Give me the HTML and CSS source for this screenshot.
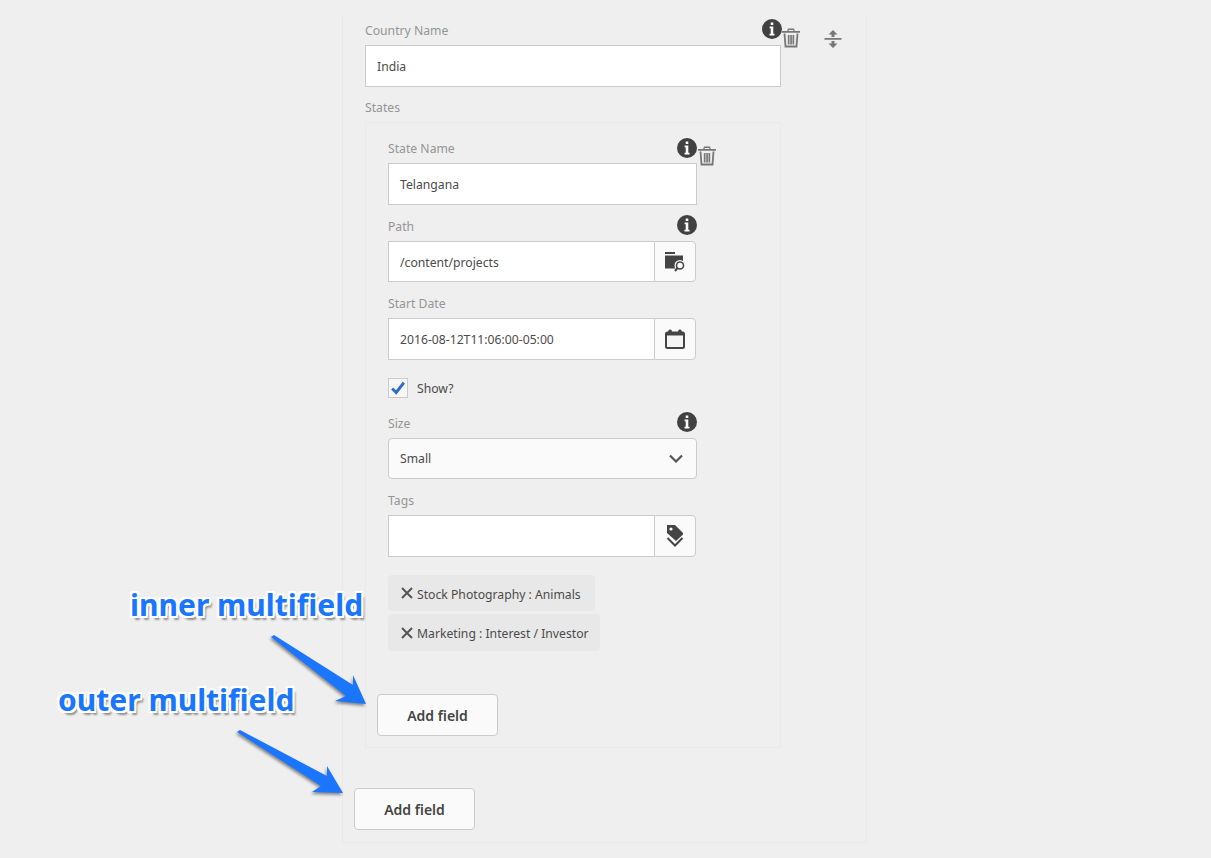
FILE: index.html
```html
<!DOCTYPE html>
<html lang="en">
<head>
<meta charset="utf-8">
<title>Multifield</title>
<link rel="stylesheet" href="styles.css">
</head>
<body>
<main class="panel outer">
  <div class="item outer-item">
    <div class="field country">
      <div class="label">Country Name</div>
      <div class="input">India</div>
      <svg class="info" viewBox="0 0 20 20"><use href="#i-info"/></svg>
      <svg class="trash" viewBox="0 0 20 20"><use href="#i-trash"/></svg>
    </div>
    <svg class="move" viewBox="0 0 18 20"><path d="M9 1l4.500 4.500H10.500V8h-3V5.500H4.500zM0.500 9h17v1.800H0.500zM7.500 12h3v2.500h3L9 19l-4.500-4.500h3z"/></svg>
    <div class="label">States</div>
    <section class="panel inner">
      <div class="item inner-item">
        <div class="field state">
          <div class="label">State Name</div>
          <div class="input">Telangana</div>
          <svg class="info" viewBox="0 0 20 20"><use href="#i-info"/></svg>
          <svg class="trash" viewBox="0 0 20 20"><use href="#i-trash"/></svg>
        </div>
        <div class="field">
          <div class="label">Path</div>
          <div class="input-group short">
            <div class="input">/content/projects</div>
            <div class="addon">
              <svg class="addon-icon" viewBox="0 0 20 20"><path fill="#444" d="M0 0h10v2H0zM0 3.500h18v13H0z"/><circle cx="15" cy="13.500" r="5.500" fill="#fafafa"/><circle cx="15" cy="13.500" r="3.500" fill="#fff" stroke="#444" stroke-width="1.600"/><path stroke="#444" stroke-width="2" d="M12.500 16L10 19"/></svg>
            </div>
          </div>
          <svg class="info" viewBox="0 0 20 20"><use href="#i-info"/></svg>
        </div>
        <div class="field">
          <div class="label">Start Date</div>
          <div class="input-group">
            <div class="input">2016-08-12T11:06:00-05:00</div>
            <div class="addon">
              <svg class="addon-icon" viewBox="0 0 20 20"><rect x="1" y="3.500" width="18" height="15.500" rx="1.500" fill="#f4f4f4" stroke="#444" stroke-width="2"/><path fill="#444" d="M1 3h18v3.500H1z"/><rect x="3.300" y="0.500" width="3.600" height="5" rx="1.500" fill="#444"/><rect x="13.100" y="0.500" width="3.600" height="5" rx="1.500" fill="#444"/></svg>
            </div>
          </div>
        </div>
        <label class="check-row">
          <span class="checkbox"><svg viewBox="0 0 20 20"><path fill="none" stroke="#2d6cc9" stroke-width="3.200" d="M3.500 10.500l4.500 4.500 8.500-11"/></svg></span>
          <span class="check-text">Show?</span>
        </label>
        <div class="field">
          <div class="label">Size</div>
          <div class="select">
            <span>Small</span>
            <svg class="chev" viewBox="0 0 14 9"><path fill="none" stroke="#555" stroke-width="2.200" d="M1 1.500l6 6 6-6"/></svg>
          </div>
          <svg class="info" viewBox="0 0 20 20"><use href="#i-info"/></svg>
        </div>
        <div class="field tags-field">
          <div class="label">Tags</div>
          <div class="input-group">
            <div class="input"></div>
            <div class="addon">
              <svg class="addon-icon tag-icon" viewBox="0 0 18 22"><path fill="#444" d="M1 0h8l8 8v1.500L10 16 1 8z"/><circle cx="5" cy="4" r="1.600" fill="#fff"/><path fill="none" stroke="#444" stroke-width="2" d="M1.500 13l7.500 7.500L16.500 13"/></svg>
            </div>
          </div>
        </div>
        <ul class="tags">
          <li class="tag one"><svg class="x" viewBox="0 0 12 12"><path stroke="#555" stroke-width="2" d="M1 1l10 10M11 1L1 11"/></svg><span class="tag-text">Stock Photography : Animals</span></li>
          <li class="tag two"><svg class="x" viewBox="0 0 12 12"><path stroke="#555" stroke-width="2" d="M1 1l10 10M11 1L1 11"/></svg><span class="tag-text">Marketing : Interest / Investor</span></li>
        </ul>
      </div>
      <button class="add">Add field</button>
    </section>
  </div>
  <button class="add">Add field</button>
</main>

<div class="note note-inner">inner multifield</div>
<div class="note note-outer">outer multifield</div>
<svg class="arrows" viewBox="0 0 1211 858">
  <polygon class="arrow" points="271,637 274,635 353,685 353,675 366,704 335,701 346,696"/>
  <polygon class="arrow" points="237,732 240,730 327,776 327,766 343,793 312,792 321,786"/>
</svg>

<svg class="defs" width="0" height="0">
  <defs>
    <symbol id="i-info" viewBox="0 0 20 20">
      <circle cx="10" cy="10" r="10" fill="#414141"/>
      <path fill="#fff" d="M8.700 3.500h2.600v2.500H8.700zM7.600 7.500h3.700v7.200h1.200v1.700h-5v-1.700h1.200v-5.500H7.600z"/>
    </symbol>
    <symbol id="i-trash" viewBox="0 0 20 20">
      <path fill="#777" d="M7 0.500h6l0.800 2.500H19v1.800H1V3h5.200zM7.800 1.900L7.500 3h5l-0.300-1.100z"/>
      <path fill="none" stroke="#777" stroke-width="1.800" d="M3.500 5.500l1 13h11l1-13"/>
      <path fill="#777" d="M6.800 7h1.700v9.500H6.800zM9.200 7h1.700v9.500H9.200zM11.500 7h1.700v9.500h-1.700z"/>
    </symbol>
  </defs>
</svg>
</body>
</html>
```

FILE: styles.css
```css
* { box-sizing: border-box; }
html, body { margin: 0; padding: 0; }
body {
  position: relative;
  height: 858px;
  overflow: hidden;
  background: #efefef;
  font-family: "Noto Sans", "Open Sans", sans-serif;
  font-size: 12.2px;
  color: #4b4b4b;
}
.panel {
  position: relative;
  border: 1px solid #e9e9e9;
  padding: 0 11px;
}
.outer {
  width: 525px;
  height: 829px;
  margin: 14px 0 0 342px;
  border-top-color: transparent;
}
.inner {
  width: 416px;
  height: 626px;
  margin-top: 7px;
}
.item { position: relative; padding: 0 11px; }
.outer-item { padding-top: 7px; height: 773px; }
.inner-item { padding-top: 17px; height: 571px; }
.label {
  height: 16px;
  line-height: 18px;
  margin-bottom: 7px;
  color: #959595;
}
.field { position: relative; margin-bottom: 13px; }
.country { width: 416px; margin-bottom: 12px; }
.state { width: 309px; }
.input {
  height: 42px;
  line-height: 42px;
  padding: 0 11px;
  background: #fff;
  border: 1px solid #cbcbcb;
}
.input-group { display: flex; width: 308px; height: 42px; }
.input-group.short { height: 41px; }
.input-group .input { flex: 1; height: 100%; line-height: 41px; border-right: 0; }
.addon {
  width: 42px;
  display: flex;
  align-items: center;
  justify-content: center;
  background: #fafafa;
  border: 1px solid #cbcbcb;
  border-radius: 0 4px 4px 0;
}
.addon-icon { width: 20px; height: 20px; }
.tag-icon { width: 18px; height: 22px; }
.info {
  position: absolute;
  top: -3px;
  right: -1px;
  width: 20px;
  height: 20px;
}
.field:not(.country):not(.state) .info { right: auto; left: 289px; }
.state .info { top: -2px; right: 0; }
.trash {
  position: absolute;
  width: 20px;
  height: 20px;
}
.country .trash { top: 6px; left: 416px; }
.state .trash { top: 6px; left: 309px; }
.move {
  position: absolute;
  top: 14px;
  left: 470px;
  width: 18px;
  height: 20px;
  fill: #777;
}
.check-row {
  display: flex;
  align-items: center;
  height: 20px;
  margin: 18px 0 17px;
}
.field + .check-row { margin-top: 18px; }
.checkbox {
  width: 20px;
  height: 20px;
  background: #f7f7f7;
  border: 1px solid #cbcbcb;
}
.checkbox svg { display: block; width: 18px; height: 18px; }
.check-text { margin-left: 9px; }
.select {
  display: flex;
  align-items: center;
  justify-content: space-between;
  width: 309px;
  height: 41px;
  padding: 0 13px 0 11px;
  background: #fafafa;
  border: 1px solid #cbcbcb;
  border-radius: 4px;
}
.chev { width: 14px; height: 9px; }
.tags-field { margin-bottom: 18px; }
.tags {
  list-style: none;
  margin: 0;
  padding: 0;
  display: flex;
  flex-direction: column;
  align-items: flex-start;
  gap: 3px;
}
.tag {
  display: flex;
  align-items: center;
  height: 36px;
  padding: 0 12px 0 13px;
  background: #e8e8e8;
  border-radius: 4px;
}
.tag.one { padding-right: 14px; }
.tag.two { height: 37px; padding-right: 11px; }
.tag-text { padding-top: 1px; }
.one .tag-text { padding-top: 2px; }
.x { width: 12px; height: 12px; margin-right: 4px; }
.add {
  display: block;
  width: 121px;
  height: 42px;
  padding: 0;
  background: #fafafa;
  border: 1px solid #cbcbcb;
  border-radius: 4px;
  font-family: inherit;
  font-size: 14px;
  font-weight: 600;
  color: #444;
}
.note {
  position: absolute;
  font-family: "Noto Sans", "Open Sans", sans-serif;
  font-size: 30px;
  line-height: 40px;
  font-weight: 700;
  color: #1a75ff;
  white-space: nowrap;
  text-shadow:
    -2px 0 0 #fff, 2px 0 0 #fff, 0 -2px 0 #fff, 0 2px 0 #fff,
    -2px -2px 0 #fff, 2px -2px 0 #fff, -2px 2px 0 #fff, 2px 2px 0 #fff,
    3px 4px 2px rgba(0, 0, 0, .4);
}
.note-inner { left: 130px; top: 585px; }
.note-outer { left: 58px; top: 680px; }
.arrows {
  position: absolute;
  left: 0;
  top: 0;
  width: 1211px;
  height: 858px;
  pointer-events: none;
}
.arrow {
  fill: #1a75ff;
  filter: drop-shadow(-1px 2px 1.500px rgba(0, 0, 0, .45));
}
.defs { position: absolute; }
```
